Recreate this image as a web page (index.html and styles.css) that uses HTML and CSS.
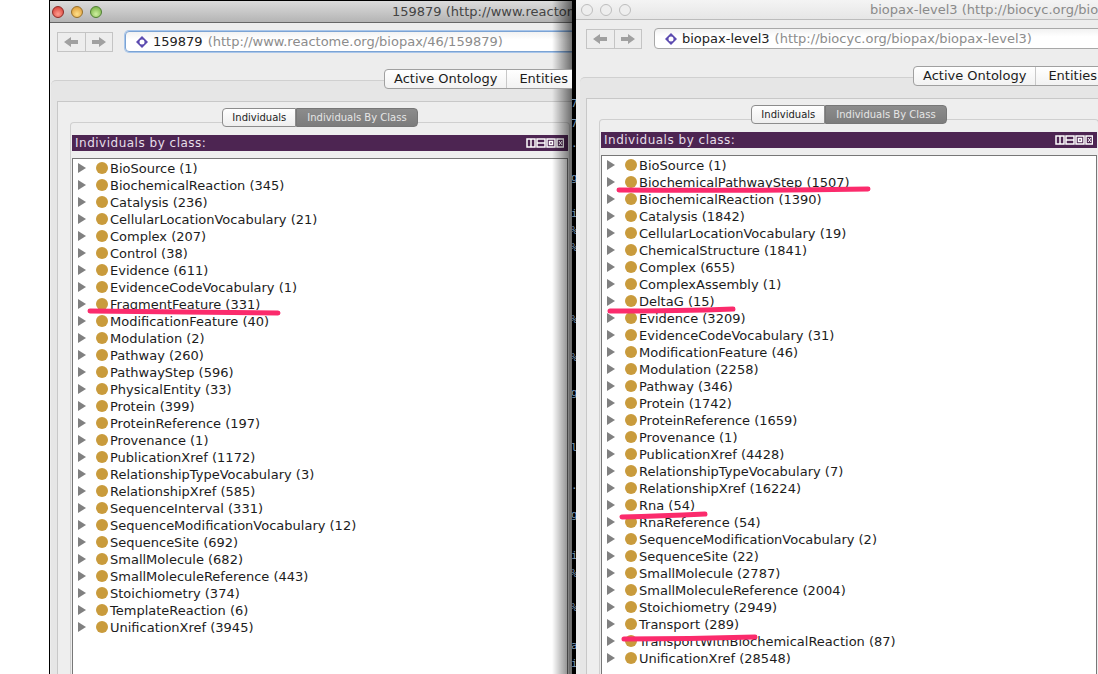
FILE: index.html
```html
<!DOCTYPE html>
<html lang="en">
  <head>
    <meta charset="UTF-8" />
    <title>Individuals by class</title>
    <link rel="stylesheet" href="styles.css">
  </head>
  <body>
    <!-- terminal showing between the two windows -->
    <svg class="terminal" width="6" height="674">
      <text x="0" y="107">7</text>
      <text x="0" y="127">7</text>
      <text x="0" y="147">.</text>
      <text x="0" y="181">g</text>
      <text x="0" y="217">i</text>
      <text x="0" y="234">%</text>
      <text x="0" y="251">%</text>
      <text x="0" y="323">%</text>
      <text x="0" y="361">%</text>
      <text x="0" y="396">g</text>
      <text x="0" y="451">l</text>
      <text x="0" y="489">.</text>
      <text x="0" y="518">g</text>
      <text x="0" y="559">i</text>
      <text x="0" y="577">%</text>
      <text x="0" y="611">%</text>
      <text x="0" y="649">a</text>
      <text x="0" y="667">i</text>
    </svg>

    <div class="window window-left">
      <div class="titlebar">
        <span class="light light-red"></span>
        <span class="light light-yellow"></span>
        <span class="light light-green"></span>
        <span class="title">159879 (http://www.reactome.org/biopax/46/159879)</span>
      </div>
      <div class="toolbar">
        <div class="nav">
          <span class="nav-btn"><svg width="16" height="12"><path d="M1 6 8 1V4H15V8H8V11Z" fill="#a0a0a0" /></svg></span>
          <span class="nav-btn"><svg width="16" height="12"><path d="M15 6 8 1V4H1V8H8V11Z" fill="#a0a0a0" /></svg></span>
        </div>
        <div class="address address-focus">
          <svg class="diamond" width="12" height="12"><path d="M6 0 12 6 6 12 0 6Z" fill="#5c4bb0" /><circle cx="6" cy="6" r="2.500" fill="#fff" /></svg>
          <b>159879</b> <span>(http://www.reactome.org/biopax/46/159879)</span>
        </div>
      </div>
      <div class="tabs">
        <span class="tab">Active Ontology</span>
        <span class="tab">Entities</span>
      </div>
      <div class="panel">
        <div class="frame">
          <div class="subpanel">
            <div class="subtabs">
              <span class="subtab">Individuals</span>
              <span class="subtab subtab-on">Individuals By Class</span>
            </div>
            <div class="view-head">
              <span>Individuals by class:</span>
              <svg width="38" height="10"><g fill="none" stroke="#fff" stroke-width="1.5"><rect x="1" y="1" width="8" height="8" /><path d="M5 1V9" /><rect x="11" y="1" width="8" height="8" /><path d="M11 5H19" /><rect x="21" y="1" width="8" height="8" /><rect x="23.5" y="3.5" width="3" height="3" /><rect x="31" y="1" width="6.500" height="8" /><path d="M33 3 36 7M36 3 33 7" stroke-width="1" /></g></svg>
            </div>
            <ul class="tree">
              <li>BioSource (1)</li>
              <li>BiochemicalReaction (345)</li>
              <li>Catalysis (236)</li>
              <li>CellularLocationVocabulary (21)</li>
              <li>Complex (207)</li>
              <li>Control (38)</li>
              <li>Evidence (611)</li>
              <li>EvidenceCodeVocabulary (1)</li>
              <li>FragmentFeature (331)</li>
              <li>ModificationFeature (40)</li>
              <li>Modulation (2)</li>
              <li>Pathway (260)</li>
              <li>PathwayStep (596)</li>
              <li>PhysicalEntity (33)</li>
              <li>Protein (399)</li>
              <li>ProteinReference (197)</li>
              <li>Provenance (1)</li>
              <li>PublicationXref (1172)</li>
              <li>RelationshipTypeVocabulary (3)</li>
              <li>RelationshipXref (585)</li>
              <li>SequenceInterval (331)</li>
              <li>SequenceModificationVocabulary (12)</li>
              <li>SequenceSite (692)</li>
              <li>SmallMolecule (682)</li>
              <li>SmallMoleculeReference (443)</li>
              <li>Stoichiometry (374)</li>
              <li>TemplateReaction (6)</li>
              <li>UnificationXref (3945)</li>
            </ul>
          </div>
        </div>
      </div>
      <div class="edge-shadow"></div>
    </div>

    <div class="window window-right">
      <div class="titlebar">
        <span class="light"></span>
        <span class="light"></span>
        <span class="light"></span>
        <span class="title">biopax-level3 (http://biocyc.org/biopax/biopax-level3)</span>
      </div>
      <div class="toolbar">
        <div class="nav">
          <span class="nav-btn"><svg width="16" height="12"><path d="M1 6 8 1V4H15V8H8V11Z" fill="#a0a0a0" /></svg></span>
          <span class="nav-btn"><svg width="16" height="12"><path d="M15 6 8 1V4H1V8H8V11Z" fill="#a0a0a0" /></svg></span>
        </div>
        <div class="address">
          <svg class="diamond" width="12" height="12"><path d="M6 0 12 6 6 12 0 6Z" fill="#5c4bb0" /><circle cx="6" cy="6" r="2.500" fill="#fff" /></svg>
          <b>biopax-level3</b> <span>(http://biocyc.org/biopax/biopax-level3)</span>
        </div>
      </div>
      <div class="tabs">
        <span class="tab">Active Ontology</span>
        <span class="tab">Entities</span>
      </div>
      <div class="panel">
        <div class="frame">
          <div class="subpanel">
            <div class="subtabs">
              <span class="subtab">Individuals</span>
              <span class="subtab subtab-on">Individuals By Class</span>
            </div>
            <div class="view-head">
              <span>Individuals by class:</span>
              <svg width="38" height="10"><g fill="none" stroke="#fff" stroke-width="1.5"><rect x="1" y="1" width="8" height="8" /><path d="M5 1V9" /><rect x="11" y="1" width="8" height="8" /><path d="M11 5H19" /><rect x="21" y="1" width="8" height="8" /><rect x="23.5" y="3.5" width="3" height="3" /><rect x="31" y="1" width="6.500" height="8" /><path d="M33 3 36 7M36 3 33 7" stroke-width="1" /></g></svg>
            </div>
            <ul class="tree">
              <li>BioSource (1)</li>
              <li>BiochemicalPathwayStep (1507)</li>
              <li>BiochemicalReaction (1390)</li>
              <li>Catalysis (1842)</li>
              <li>CellularLocationVocabulary (19)</li>
              <li>ChemicalStructure (1841)</li>
              <li>Complex (655)</li>
              <li>ComplexAssembly (1)</li>
              <li>DeltaG (15)</li>
              <li>Evidence (3209)</li>
              <li>EvidenceCodeVocabulary (31)</li>
              <li>ModificationFeature (46)</li>
              <li>Modulation (2258)</li>
              <li>Pathway (346)</li>
              <li>Protein (1742)</li>
              <li>ProteinReference (1659)</li>
              <li>Provenance (1)</li>
              <li>PublicationXref (4428)</li>
              <li>RelationshipTypeVocabulary (7)</li>
              <li>RelationshipXref (16224)</li>
              <li>Rna (54)</li>
              <li>RnaReference (54)</li>
              <li>SequenceModificationVocabulary (2)</li>
              <li>SequenceSite (22)</li>
              <li>SmallMolecule (2787)</li>
              <li>SmallMoleculeReference (2004)</li>
              <li>Stoichiometry (2949)</li>
              <li>Transport (289)</li>
              <li>TransportWithBiochemicalReaction (87)</li>
              <li>UnificationXref (28548)</li>
            </ul>
          </div>
        </div>
      </div>
    </div>

    <!-- hand drawn marks on top of the screenshot -->
    <svg class="marks" width="1098" height="674">
      <g fill="none" stroke="#fb2b6c" stroke-width="5" stroke-linecap="round">
        <path d="M90 311 Q180 312 278 313" />
        <path d="M619 190 Q740 191 868 189" />
        <path d="M610 311 Q680 311 733 309" />
        <path d="M622 517 Q660 516 705 514" />
        <path d="M624 639 Q690 639 755 637" />
      </g>
    </svg>
  </body>
</html>
```

FILE: styles.css
```css
html, body {
  margin: 0;
  height: 100%;
  background-color: #fff;
  overflow: hidden;
}
body {
  font-family: "DejaVu Sans", sans-serif;
  font-size: 13px;
  color: #1c1c1c;
}

.terminal {
  position: absolute;
  left: 571px;
  top: 0;
  background-color: #000;
}
.terminal text {
  font-family: "DejaVu Sans Mono", monospace;
  font-size: 11px;
  fill: #7f9ab5;
}

.window {
  position: absolute;
  bottom: 0;
  display: flex;
  flex-direction: column;
  background-color: #ededed;
  overflow: hidden;
  white-space: nowrap;
}
.window-left {
  left: 49px;
  top: 0;
  width: 522px;
  border-top: 1px solid #000;
  border-left: 1px solid #000;
}
.window-right {
  left: 576px;
  top: 0;
  width: 522px;
  padding-left: 3px;
  box-sizing: border-box;
}

.titlebar {
  display: flex;
  align-items: center;
  flex: none;
  height: 21px;
  margin-left: -3px;
  padding-left: 5px;
  gap: 7px;
  background: linear-gradient(#dcdcdc, #b4b4b4);
  border-bottom: 1px solid #666;
}
.window-right .titlebar {
  height: 19px;
  padding-left: 5px;
  background: linear-gradient(#f4f4f4, #e6e6e6);
  border-bottom-color: #bcbcbc;
}
.window-left .titlebar {
  margin-left: 0;
  padding-left: 2px;
}
.light {
  flex: none;
  width: 12px;
  height: 12px;
  border-radius: 50%;
  background-color: #eee;
  border: 1px solid #bdbdbd;
  box-sizing: border-box;
}
.light-red {
  background: radial-gradient(circle at 50% 70%, #ff9d8f, #d0312a);
  border-color: #8e2a25;
}
.light-yellow {
  background: radial-gradient(circle at 50% 70%, #ffe08a, #d7912b);
  border-color: #96702a;
}
.light-green {
  background: radial-gradient(circle at 50% 70%, #cff0a0, #6aa838);
  border-color: #4f7f33;
}
.title {
  font-size: 13px;
  color: #444;
}
.window-left .title {
  margin-left: 283px;
}
.window-right .title {
  margin-left: 232px;
  color: #8a8a8a;
}

.toolbar {
  display: flex;
  align-items: center;
  flex: none;
  height: 42px;
  padding: 0 0 5px 7px;
  box-sizing: border-box;
  gap: 12px;
}
.nav {
  display: flex;
  flex: none;
  width: 56px;
  height: 20px;
  box-sizing: border-box;
  border: 1px solid #c4c4c4;
}
.nav-btn {
  display: flex;
  align-items: center;
  justify-content: center;
  flex: 1;
}
.nav-btn + .nav-btn {
  border-left: 1px solid #c4c4c4;
}
.address {
  display: flex;
  align-items: center;
  gap: 5px;
  flex: none;
  width: 620px;
  height: 21px;
  padding-left: 10px;
  box-sizing: border-box;
  background: linear-gradient(#f2f2f2, #fff 40%);
  border: 1px solid #a8a8a8;
  border-radius: 4px;
  font-size: 13px;
}
.address b {
  font-weight: 400;
  color: #222;
}
.address span {
  color: #8c8c8c;
}
.address-focus {
  border-color: #7ba3d4;
  box-shadow: 0 0 0 1px #a9c6ea;
}
.diamond {
  flex: none;
}

.tabs {
  position: relative;
  z-index: 1;
  display: flex;
  flex: none;
  width: 400px;
  height: 20px;
  margin: 4px 0 -9px 334px;
  box-sizing: border-box;
  background: linear-gradient(#fff, #f2f2f2);
  border: 1px solid #a0a0a0;
  border-radius: 4px 0 0 4px;
  font-size: 13px;
  line-height: 18px;
}
.tab {
  padding: 0 9px;
}
.tab + .tab {
  padding-left: 12px;
  border-left: 1px solid #c8c8c8;
}

.panel {
  flex: 1;
  margin-left: 1px;
  padding-top: 20px;
  background-color: #e6e6e6;
  border-top: 1px solid #d0d0d0;
  border-radius: 5px 0 0 0;
}
.frame {
  height: 100%;
  margin-left: 6px;
  padding-left: 12px;
  background-color: #eee;
  border-top: 1px solid #c8c8c8;
  border-left: 1px solid #c8c8c8;
}
.subtabs {
  display: flex;
  justify-content: center;
  height: 19px;
  margin-top: -15px;
  margin-bottom: 8px;
  font-size: 10px;
  line-height: 17px;
}
.subpanel {
  width: 500px;
  height: 100%;
  margin-top: 20px;
  padding: 0 1px;
  box-sizing: border-box;
  border: 1px solid #cfcfcf;
  border-width: 1px 1px 0 1px;
  border-radius: 4px 4px 0 0;
}
.subtab {
  box-sizing: border-box;
  padding: 0 9px;
  background: linear-gradient(#fff, #eee);
  border: 1px solid #8c8c8c;
  border-radius: 4px 0 0 4px;
}
.subtab-on {
  padding: 0 10px;
  color: #e6e6e6;
  background: linear-gradient(#8c8c8c, #7c7c7c);
  border-color: #777;
  border-radius: 0 4px 4px 0;
}

.view-head {
  display: flex;
  align-items: center;
  justify-content: space-between;
  height: 16px;
  padding: 0 4px 0 3px;
  background-color: #4d2552;
  color: #e6dfe8;
  font-size: 12px;
  letter-spacing: 0.5px;
}

.tree {
  height: 100%;
  margin: 7px 0 0;
  padding: 1px 0 0 5px;
  list-style: none;
  background-color: #fff;
  border: 1px solid #777;
  border-bottom: 0;
}
.tree li {
  position: relative;
  height: 17px;
  padding-left: 32px;
  line-height: 17px;
}
/* disclosure triangle */
.tree li::before {
  content: "";
  position: absolute;
  left: 0;
  top: 3px;
  border-left: 8px solid #808080;
  border-top: 5px solid transparent;
  border-bottom: 5px solid transparent;
}
/* class dot */
.tree li::after {
  content: "";
  position: absolute;
  left: 18px;
  top: 2px;
  width: 12px;
  height: 12px;
  border-radius: 50%;
  background-color: #c99b3c;
}

.edge-shadow {
  position: absolute;
  top: 0;
  right: 0;
  bottom: 0;
  width: 20px;
  background: linear-gradient(to right, rgba(0, 0, 0, 0), rgba(0, 0, 0, 0.55));
}

.marks {
  position: absolute;
  left: 0;
  top: 0;
  pointer-events: none;
}
```
